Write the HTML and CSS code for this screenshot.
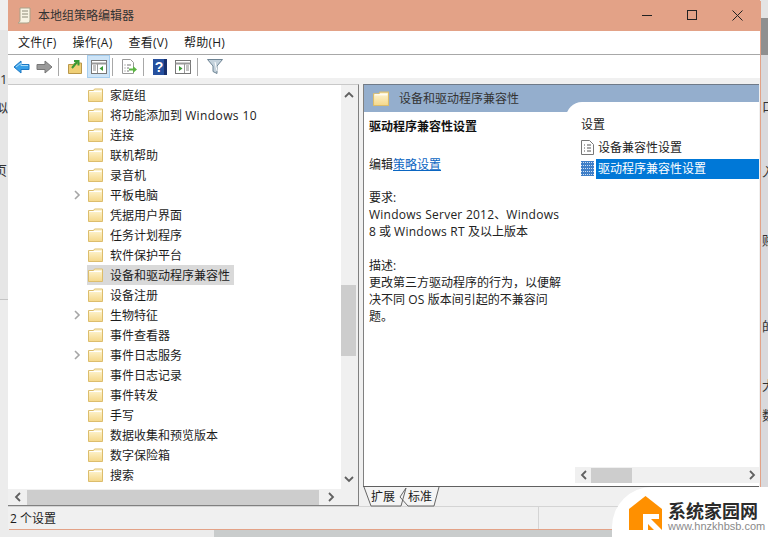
FILE: index.html
```html
<!DOCTYPE html>
<html lang="zh">
<head>
<meta charset="utf-8">
<title>本地组策略编辑器</title>
<link rel="stylesheet" href="styles.css">
</head>
<body>
<svg class="defs" width="0" height="0">
  <defs>
    <linearGradient id="fg" x1="0" y1="0" x2="0" y2="1"><stop offset="0" stop-color="#fff7d8"/><stop offset="1" stop-color="#f5d88a"/></linearGradient>
    <symbol id="folder" viewBox="0 0 15 14">
      <path d="M.5 2.500h5l1-1.500h8v12.500h-14z" fill="url(#fg)" stroke="#dcbd6c"/>
      <path d="M1.500 3.500h12" stroke="#fff" fill="none"/>
    </symbol>
    <symbol id="chev" viewBox="0 0 9 10">
      <path d="M2 1l4 4-4 4" fill="none" stroke="#a6a6a6" stroke-width="1.600"/>
    </symbol>
  </defs>
</svg>
<div class="desk">
  <div class="lstrip"></div>
  <div class="rstrip"></div>
  <span class="frag f1">1</span><span class="frag f2">似</span><span class="frag f3">页</span>
  <span class="frag f4">口</span><span class="frag f5">入</span><span class="frag f6">贼</span><span class="frag f7">的</span><span class="frag f8">大</span><span class="frag f9">数</span>
  <div class="shade"></div>
  <div class="window">
    <header class="title">
      <svg class="appicon" width="14" height="17" viewBox="0 0 14 17"><path d="M3 1h10v12c0 2-1 3-3 3H1c1-1 2-1 2-3z" fill="#f7f3e3" stroke="#a8a28a"/><path d="M5 4h6M5 7h6M5 10h6" stroke="#8c8a78"/></svg>
      <span class="title-text">本地组策略编辑器</span>
      <div class="controls">
        <svg width="10" height="10" viewBox="0 0 10 10"><path d="M0 5.500h10" stroke="#222"/></svg>
        <svg width="10" height="10" viewBox="0 0 10 10"><rect x=".5" y=".5" width="9" height="9" fill="none" stroke="#222"/></svg>
        <svg width="11" height="11" viewBox="0 0 11 11"><path d="M.5.500l10 10M10.500.500l-10 10" stroke="#222"/></svg>
      </div>
    </header>
    <nav class="menu">
      <span>文件(F)</span><span>操作(A)</span><span>查看(V)</span><span>帮助(H)</span>
    </nav>
    <div class="toolbar">
      <svg class="tb back" width="17" height="14" viewBox="0 0 17 14"><path d="M8 1L1 7l7 6V9.500h8v-5H8z" fill="#38a0e8" stroke="#1c78c4"/><path d="M3 7l5-4v2.500h7" fill="none" stroke="#a8dcf8"/></svg>
      <svg class="tb fwd" width="17" height="14" viewBox="0 0 17 14"><path d="M9 1l7 6-7 6V9.500H1v-5h8z" fill="#9a9a9a" stroke="#777"/></svg>
      <i class="sep"></i>
      <svg class="tb up" width="15" height="15" viewBox="0 0 15 15"><path d="M.5 5.500h5l1-1.500h7v10.500h-13z" fill="#efcf76" stroke="#b9974a"/><path d="M4 9l5-6M6 2h4.500v4.500" fill="none" stroke="#3a9a35" stroke-width="2"/></svg>
      <span class="tb-active"><svg width="16" height="14" viewBox="0 0 16 14"><rect x=".5" y=".5" width="15" height="13" fill="#fff" stroke="#777"/><path d="M.5 3.500h15" stroke="#999" stroke-width="2"/><path d="M6.500 4v9" stroke="#999"/><path d="M2 6h3M2 8h3M2 10h3" stroke="#888"/><path d="M12 6v5L8.500 8.500z" fill="#3a9a35"/></svg></span>
      <i class="sep sep-b"></i>
      <svg class="tb exp" width="17" height="16" viewBox="0 0 17 16"><path d="M1.500.5h8l3 3v11h-11z" fill="#fff" stroke="#999"/><path d="M3.500 6h1M3.500 9h1M3.500 12h1M6 6h4M6 9h2M6 12h2" stroke="#777"/><path d="M8 9.500h4V7l4 3.500-4 3.500v-2.500H8z" fill="#5cb443"/></svg>
      <i class="sep"></i>
      <svg class="tb help" width="14" height="16" viewBox="0 0 14 16"><rect width="14" height="16" fill="#26509e"/><rect x="11" width="3" height="16" fill="#172f6c"/><text x="6" y="13" class="q">?</text></svg>
      <svg class="tb panel" width="16" height="14" viewBox="0 0 16 14"><rect x=".5" y=".5" width="15" height="13" fill="#fff" stroke="#777"/><path d="M.5 3.500h15" stroke="#999" stroke-width="2"/><path d="M9.500 4v9" stroke="#999"/><path d="M11 6h3M11 8h3M11 10h3" stroke="#888"/><path d="M4 6v5l3.500-2.500z" fill="#3a9a35"/></svg>
      <i class="sep"></i>
      <svg class="tb filter" width="16" height="15" viewBox="0 0 16 15"><path d="M.5.5h15L10 7v7.500l-4-2V7z" fill="#c4d2dc" stroke="#6e8494"/><path d="M8 3l2 9" stroke="#fff" fill="none"/></svg>
    </div>
    <main class="panes">
      <section class="treepane">
        <div class="tree-top">
          <ul class="tree">
            <li><svg class="fold"><use href="#folder"/></svg>家庭组</li>
            <li><svg class="fold"><use href="#folder"/></svg><span>将功能添加到 <span class="lat wide">Windows 10</span></span></li>
            <li><svg class="fold"><use href="#folder"/></svg>连接</li>
            <li><svg class="fold"><use href="#folder"/></svg>联机帮助</li>
            <li><svg class="fold"><use href="#folder"/></svg>录音机</li>
            <li><svg class="exp-arrow"><use href="#chev"/></svg><svg class="fold"><use href="#folder"/></svg>平板电脑</li>
            <li><svg class="fold"><use href="#folder"/></svg>凭据用户界面</li>
            <li><svg class="fold"><use href="#folder"/></svg>任务计划程序</li>
            <li><svg class="fold"><use href="#folder"/></svg>软件保护平台</li>
            <li class="sel"><svg class="fold"><use href="#folder"/></svg><span>设备和驱动程序兼容性</span></li>
            <li><svg class="fold"><use href="#folder"/></svg>设备注册</li>
            <li><svg class="exp-arrow"><use href="#chev"/></svg><svg class="fold"><use href="#folder"/></svg>生物特征</li>
            <li><svg class="fold"><use href="#folder"/></svg>事件查看器</li>
            <li><svg class="exp-arrow"><use href="#chev"/></svg><svg class="fold"><use href="#folder"/></svg>事件日志服务</li>
            <li><svg class="fold"><use href="#folder"/></svg>事件日志记录</li>
            <li><svg class="fold"><use href="#folder"/></svg>事件转发</li>
            <li><svg class="fold"><use href="#folder"/></svg>手写</li>
            <li><svg class="fold"><use href="#folder"/></svg>数据收集和预览版本</li>
            <li><svg class="fold"><use href="#folder"/></svg>数字保险箱</li>
            <li><svg class="fold"><use href="#folder"/></svg>搜索</li>
          </ul>
          <div class="vscroll">
            <svg class="arr" width="12" height="8" viewBox="0 0 12 8"><path d="M2 6l4-4 4 4" fill="none" stroke="#606060" stroke-width="1.800"/></svg>
            <div class="vtrack"><div class="vthumb"></div></div>
            <svg class="arr" width="12" height="8" viewBox="0 0 12 8"><path d="M2 2l4 4 4-4" fill="none" stroke="#606060" stroke-width="1.800"/></svg>
          </div>
        </div>
        <div class="hscroll">
          <svg width="8" height="12" viewBox="0 0 8 12"><path d="M6 2L2 6l4 4" fill="none" stroke="#606060" stroke-width="1.800"/></svg>
          <div class="hthumb"></div>
          <svg width="8" height="12" viewBox="0 0 8 12"><path d="M2 2l4 4-4 4" fill="none" stroke="#606060" stroke-width="1.800"/></svg>
        </div>
      </section>
      <section class="detail">
        <div class="detail-head">
          <svg class="headfold" width="16" height="15"><use href="#folder"/></svg>
          <span>设备和驱动程序兼容性</span>
        </div>
        <div class="detail-body">
          <article class="desc">
            <h2>驱动程序兼容性设置</h2>
            <p class="gap1">编辑<a>策略设置</a></p>
            <p class="gap2">要求:<br><span class="lat">Windows Server 2012</span>、<span class="lat">Windows</span> 8 或 <span class="lat">Windows RT</span> 及以上版本</p>
            <p class="gap3">描述:<br>更改第三方驱动程序的行为，以便解决不同 <span class="lat">OS</span> 版本间引起的不兼容问题。</p>
          </article>
          <aside class="settings">
            <div class="settings-title">设置</div>
            <div class="row">
              <svg width="13" height="15" viewBox="0 0 13 15"><path d="M.5.5h8l4 4v10H.5z" fill="#fff" stroke="#777"/><path d="M3 5h1M3 8h1M3 11h1M6 5h4M6 8h4M6 11h4" stroke="#555"/></svg>
              <span>设备兼容性设置</span>
            </div>
            <div class="row on">
              <svg width="13" height="15" viewBox="0 0 13 15"><rect width="13" height="15" fill="#3f7fc8"/><path d="M0 1.500h13M0 4.500h13M0 7.500h13M0 10.500h13M0 13.500h13" stroke="#cfe0f4" stroke-dasharray="1 1"/></svg>
              <span>驱动程序兼容性设置</span>
            </div>
            <div class="settings-fill"></div>
            <div class="hscroll2">
              <svg width="8" height="12" viewBox="0 0 8 12"><path d="M6 2L2 6l4 4" fill="none" stroke="#606060" stroke-width="1.800"/></svg>
              <div class="hthumb2"></div>
              <svg width="8" height="12" viewBox="0 0 8 12"><path d="M2 2l4 4-4 4" fill="none" stroke="#606060" stroke-width="1.800"/></svg>
            </div>
          </aside>
        </div>
        <div class="tabs">
          <svg class="tabs-art" width="84" height="20" viewBox="0 0 84 20"><path d="M1 0l7 19h30L43 1 37 10l8 9h26l5-19" fill="#f4f4f4" stroke="#666"/></svg>
          <span class="tab first">扩展</span><span class="tab">标准</span>
        </div>
      </section>
    </main>
    <footer class="status">
      <span class="s1">2 个设置</span><span class="s2"></span><span class="s3"></span>
    </footer>
  </div>
  <div class="watermark">
    <svg width="33" height="34" viewBox="0 0 33 34"><path d="M16.500 0L33 13v21H0V13z" fill="#ff9000"/><path d="M14 18h16v5h-8l11 11H25l-6-6v6h-5z" fill="#fff"/></svg>
    <div class="wm-text">
      <strong>系统家园网</strong>
      <small>www.hnzkhbsb.com</small>
    </div>
  </div>
</div>
</body>
</html>
```
FILE: styles.css
```css
* { box-sizing: border-box; }
html, body { margin: 0; padding: 0; }
body { width: 768px; height: 537px; overflow: hidden; font-family: "Open Sans", "Noto Sans CJK SC", sans-serif; font-size: 12px; color: #1c1c1c; }
.defs { position: absolute; }
ul, h2, p { margin: 0; padding: 0; list-style: none; }
.lat { letter-spacing: .25px; }
.lat.wide { letter-spacing: .4px; }

.desk { position: relative; width: 768px; height: 537px; background: #ececec; overflow: hidden; }
.lstrip { position: absolute; left: 0; top: 0; width: 8px; height: 300px; background: #e6e6e6; border-top: 30px solid #efefef; border-bottom: 1px solid #c4c4c4; }
.rstrip { position: absolute; right: 0; top: 0; width: 8px; height: 529px; background: #d9d9dc; border-top: 18px solid #e4e4e4; }
.rstrip::before { content: ""; display: block; height: 37px; background: #8f8f8f; }
.shade { position: absolute; left: 214px; right: 0; top: 529px; height: 8px; background: #c9cccc; }
.frag { position: absolute; font-size: 13px; line-height: 16px; color: #333; }
.f1 { left: 0; top: 71px; }
.f2 { left: -5px; top: 99px; }
.f3 { left: -6px; top: 162px; }
.f4 { left: 762px; top: 98px; }
.f5 { left: 762px; top: 163px; }
.f6 { left: 762px; top: 232px; }
.f7 { left: 762px; top: 318px; }
.f8 { left: 762px; top: 377px; }
.f9 { left: 762px; top: 407px; }

.window { position: absolute; left: 8px; top: 0; width: 752px; height: 529px; background: #f0f0f0; display: flex; flex-direction: column; box-shadow: 1px 1px 0 #e3a287; }

.title { height: 31px; background: #e3a287; display: flex; align-items: center; padding: 0 0 1px 9px; flex: none; }
.appicon { margin-right: 7px; }
.title-text { color: #333; font-size: 12px; padding-bottom: 1px; }
.controls { margin-left: auto; display: flex; align-items: center; gap: 35px; padding-right: 17px; }

.menu { height: 24px; background: #fff; display: flex; gap: 16px; align-items: center; padding: 0 0 1px 10px; flex: none; border-bottom: 1px solid #a8a8a8; letter-spacing: .25px; }

.toolbar { height: 23px; background: #fff; display: flex; align-items: center; padding-left: 5px; flex: none; }
.tb { margin-right: 6px; flex: none; }
.tb.fwd { margin-right: 5px; }
.sep { width: 1px; height: 18px; background: #a8a8a8; margin-right: 9px; flex: none; }
.sep-b { margin-right: 8px; }
.tb.up { margin-right: 4px; }
.tb-active { width: 23px; height: 23px; background: #cde4f7; border: 1px solid #a5cdee; display: flex; align-items: center; justify-content: center; margin-right: 2px; flex: none; }
.tb.exp { margin-right: 5px; }
.tb.help { margin-right: 8px; }
.q { font: bold 14px "Liberation Sans", sans-serif; fill: #fff; text-anchor: middle; }
.tb.panel { margin-right: 6px; }

.panes { flex: 1; min-height: 0; display: flex; padding-top: 6px; background: #f0f0f0; }
.treepane { width: 351px; border-top: 1px solid #c8c8c8; border-right: 1px solid #808080; border-bottom: 1px solid #808080; display: flex; flex-direction: column; flex: none; background: #f0f0f0; }
.tree-top { flex: 1; min-height: 0; display: flex; }
.tree { flex: 1; background: #fff; overflow: hidden; }
.tree li { height: 20px; display: flex; align-items: center; position: relative; padding: 0 0 1px 80px; white-space: nowrap; }
.fold { width: 15px; height: 14px; margin: 1px 7px 0 0; flex: none; position: relative; }
.exp-arrow { position: absolute; left: 65px; top: 5px; width: 9px; height: 10px; }
.sel span { position: relative; }
.sel::before { content: ""; position: absolute; left: 79px; top: 0; width: 147px; height: 20px; background: #d9d9d9; }

.vscroll { width: 17px; background: #f0f0f0; display: flex; flex-direction: column; align-items: center; padding: 6px 2px 6px 0; flex: none; }
.arr { flex: none; }
.vtrack { flex: 1; width: 100%; padding-top: 186px; }
.vthumb { height: 71px; width: 15px; background: #cdcdcd; }

.hscroll { height: 16px; background: #f0f0f0; display: flex; align-items: center; padding: 0 10px 0 6px; flex: none; }
.hthumb { width: 292px; height: 15px; background: #cdcdcd; margin: 0 8px 0 5px; }

.detail { flex: 1; margin-left: 4px; display: flex; flex-direction: column; min-width: 0; margin-right: 1px; }
.detail-head { height: 28px; background: #94aecd; border-top: 1px solid #6f7a88; border-left: 1px solid #808080; display: flex; align-items: center; flex: none; padding-left: 9px; }
.headfold { margin-right: 10px; }
.detail-head span { color: #333; font-size: 12px; padding-bottom: 1px; }
.detail-body { flex: none; height: 374px; background: #fff; border-left: 1px solid #808080; display: flex; position: relative; }
.desc { width: 202px; padding: 6px 0 0 5px; flex: none; line-height: 17px; color: #222; }
.desc h2 { font-size: 12px; font-weight: 700; line-height: 17px; color: #111; }
.gap1 { margin-top: 21px; }
.gap2 { margin-top: 16px; }
.gap3 { margin-top: 17px; }
.desc a { color: #0b66c2; text-decoration: underline; }
.settings { position: absolute; left: 202px; right: 0; top: -10px; bottom: 0; background: #fff; border-top-left-radius: 16px; display: flex; flex-direction: column; padding: 14px 0 3px 15px; }
.settings-title { height: 17px; line-height: 17px; margin-bottom: 4px; color: #222; }
.row { height: 21px; display: flex; align-items: center; gap: 2px; }
.row span { flex: 1; height: 20px; line-height: 19px; padding-left: 2px; color: #222; }
.row.on span { background: #0078d7; color: #fff; }
.settings-fill { flex: 1; }
.hscroll2 { height: 16px; margin-left: -6px; background: #f0f0f0; display: flex; align-items: center; padding: 0 3px 0 5px; justify-content: space-between; }
.hthumb2 { width: 41px; height: 15px; background: #cdcdcd; margin: 0 auto 0 3px; }

.tabs { height: 20px; background: #f0f0f0; border-top: 1px solid #606060; display: flex; padding-left: 8px; flex: none; position: relative; }
.tabs-art { position: absolute; left: 0; top: 0; }
.tab { position: relative; width: 28px; height: 19px; line-height: 19px; margin-right: 7px; white-space: nowrap; }
.tab.first { width: 29px; margin-right: 8px; }

.status { flex: none; height: 23px; border-top: 1px solid #d4d4d4; display: flex; background: #f0f0f0; }
.s1 { width: 355px; padding-left: 2px; line-height: 24px; }
.s2 { width: 176px; border-right: 1px solid #d4d4d4; }
.s3 { flex: 1; }

.watermark { position: absolute; right: 0; bottom: 0; width: 156px; height: 50px; background: #fff; border-top-left-radius: 40px; display: flex; align-items: flex-start; padding: 9px 0 0 17px; gap: 6px; }
.wm-text { display: flex; flex-direction: column; margin-top: 4px; }
.wm-text strong { font-family: "Noto Sans CJK SC", sans-serif; font-size: 18px; line-height: 20px; font-weight: 700; color: #2b2b2b; }
.wm-text small { font-family: "Liberation Sans", sans-serif; font-size: 11px; line-height: 12px; color: #8a8a8a; white-space: nowrap; }
```
